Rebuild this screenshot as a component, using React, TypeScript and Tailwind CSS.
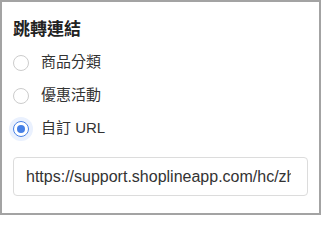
const font = { fontFamily: '"Liberation Sans", "Noto Sans CJK TC", sans-serif' };

function Radio({ label, checked }: { label: string; checked?: boolean }) {
  return (
    <label className="flex h-[33px] items-center gap-[12px]">
      {checked ? (
        <span className="grid h-[16px] w-[16px] place-items-center rounded-full border-[1.5px] border-[#4680e6] shadow-[0_0_0_4px_#eaf1fe]">
          <span className="h-[8px] w-[8px] rounded-full bg-[#4680e6]" />
        </span>
      ) : (
        <span className="h-[16px] w-[16px] rounded-full border border-[#cccccc] bg-white" />
      )}
      <span className="text-[15px] text-[#333]">{label}</span>
    </label>
  );
}

export default function App() {
  return (
    <div
      className="flex h-[215px] w-[321px] flex-col border-2 border-[#a3a3a3] bg-white px-[11px]"
      style={font}
    >
      <div className="mt-[16px] h-[24px] text-[17px] font-bold leading-[24px] text-[#222]">跳轉連結</div>
      <div className="mt-[4px] flex flex-col">
        <Radio label="商品分類" />
        <Radio label="優惠活動" />
        <Radio label="自訂 URL" checked />
      </div>
      <input
        readOnly
        value="https://support.shoplineapp.com/hc/zh-tw"
        className="mt-[12px] h-[39px] w-full rounded-[4px] border border-[#dcdcdc] pl-[12px] pr-[16px] text-[16px] text-[#333] outline-none"
      />
    </div>
  );
}
